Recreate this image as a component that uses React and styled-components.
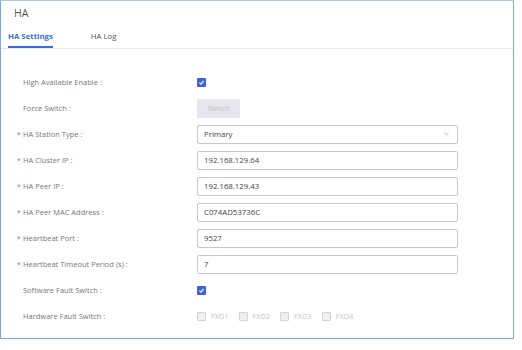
import React from "react";
import styled, { createGlobalStyle } from "styled-components";

const GlobalStyle = createGlobalStyle`
  html, body {
    margin: 0;
    padding: 0;
    background: #fff;
  }
  body {
    font-family: "Open Sans", "Noto Sans", sans-serif;
  }
`;

const fields = [
  { label: "High Available Enable", type: "check", checked: true },
  { label: "Force Switch", type: "button", value: "Switch" },
  { label: "HA Station Type", required: true, type: "select", value: "Primary" },
  { label: "HA Cluster IP", required: true, type: "input", value: "192.168.129.64" },
  { label: "HA Peer IP", required: true, type: "input", value: "192.168.129.43" },
  { label: "HA Peer MAC Address", required: true, type: "input", value: "C074AD53736C" },
  { label: "Heartbeat Port", required: true, type: "input", value: "9527" },
  { label: "Heartbeat Timeout Period (s)", required: true, type: "input", value: "7" },
  { label: "Software Fault Switch", type: "check", checked: true },
  { label: "Hardware Fault Switch", type: "ports", ports: ["FXO1", "FXO2", "FXO3", "FXO4"] },
];

function CheckIcon() {
  return (
    <svg width="7" height="7" viewBox="0 0 10 10">
      <path d="M2 5.2 L4.2 7.3 L8 2.8" fill="none" stroke="#fff" strokeWidth="1.6" />
    </svg>
  );
}

function Control({ field }) {
  if (field.type === "check") {
    return (
      <CheckBox checked={field.checked}>{field.checked && <CheckIcon />}</CheckBox>
    );
  }
  if (field.type === "button") {
    return <SwitchButton disabled>{field.value}</SwitchButton>;
  }
  if (field.type === "select") {
    return (
      <Select>
        <span>{field.value}</span>
        <svg width="5" height="4" viewBox="0 0 6 4">
          <path d="M0.5 0.5 L3 3 L5.5 0.5" fill="none" stroke="#999" strokeWidth="0.9" />
        </svg>
      </Select>
    );
  }
  if (field.type === "ports") {
    return (
      <Ports>
        {field.ports.map((p) => (
          <Port key={p}>
            <CheckBox disabled />
            <span>{p}</span>
          </Port>
        ))}
      </Ports>
    );
  }
  return <Input>{field.value}</Input>;
}

export default function App() {
  return (
    <>
      <GlobalStyle />
      <Panel>
        <Title>HA</Title>
        <Tabs>
          <Tab active>HA Settings</Tab>
          <Tab>HA Log</Tab>
        </Tabs>
        <Form>
          {fields.map((f) => (
            <Row key={f.label}>
              <Label>
                <Star>{f.required ? "*" : ""}</Star>
                {f.label} :
              </Label>
              <Control field={f} />
            </Row>
          ))}
        </Form>
      </Panel>
    </>
  );
}

const Panel = styled.div`
  width: 514px;
  height: 339px;
  box-sizing: border-box;
  border: 1px solid #7aa7dc;
  border-top-color: #a9c8ea;
  background: #fff;
`;

const Title = styled.div`
  padding: 5px 0 0 13px;
  height: 17px;
  font-size: 10.5px;
  color: #555;
`;

const Tabs = styled.div`
  display: flex;
  gap: 38px;
  padding-left: 7px;
  height: 25px;
  border-bottom: 1px solid #e6e6e6;
`;

const Tab = styled.div`
  display: flex;
  align-items: center;
  font-size: 7.8px;
  font-weight: ${(p) => (p.active ? 700 : 400)};
  color: ${(p) => (p.active ? "#3a6be0" : "#555")};
  border-bottom: 2px solid ${(p) => (p.active ? "#3a6be0" : "transparent")};
  padding-top: 2px;
`;

const Form = styled.div`
  padding: 20px 0 0 16px;
  display: flex;
  flex-direction: column;
`;

const Row = styled.div`
  display: grid;
  grid-template-columns: 180px 1fr;
  align-items: center;
  height: 26px;
`;

const Label = styled.div`
  display: flex;
  align-items: center;
  font-size: 7.5px;
  color: #777;
  white-space: pre;
`;

const Star = styled.span`
  width: 6px;
  color: #e05a5a;
  font-size: 7px;
`;

const CheckBox = styled.span`
  display: inline-flex;
  align-items: center;
  justify-content: center;
  width: 9px;
  height: 9px;
  box-sizing: border-box;
  border-radius: 1px;
  background: ${(p) => (p.checked ? "#3565de" : p.disabled ? "#f0f0f0" : "#fff")};
  border: 1px solid ${(p) => (p.checked ? "#3565de" : "#d4d4d4")};
`;

const SwitchButton = styled.button`
  width: 43px;
  height: 19px;
  padding: 0;
  border: none;
  border-radius: 1px;
  background: #e6e6ec;
  color: #c3c3c8;
  font-family: inherit;
  font-size: 7.4px;
`;

const fieldBox = `
  width: 261px;
  height: 19px;
  box-sizing: border-box;
  border: 1px solid #c8c8c8;
  border-radius: 2px;
  padding: 0 6px;
  font-size: 7.8px;
  color: #444;
  display: flex;
  align-items: center;
`;

const Input = styled.div`
  ${fieldBox}
`;

const Select = styled.div`
  ${fieldBox}
  justify-content: space-between;
  padding-right: 8px;
`;

const Ports = styled.div`
  display: flex;
  gap: 10px;
`;

const Port = styled.div`
  display: flex;
  align-items: center;
  gap: 5px;
  font-size: 7.2px;
  color: #c4c4c4;
`;
